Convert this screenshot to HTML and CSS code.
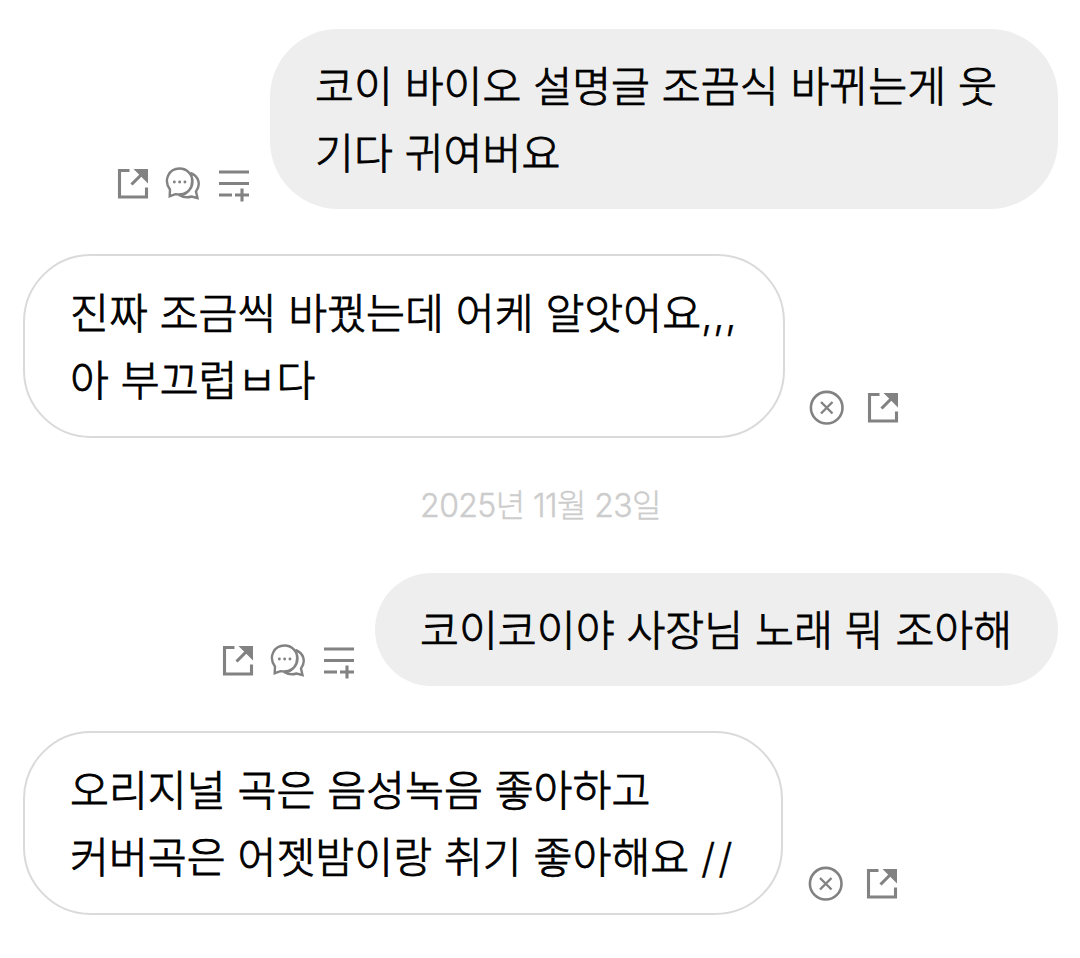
FILE: index.html
```html
<!DOCTYPE html>
<html lang="ko">
<head>
  <meta charset="UTF-8">
  <title>Chat</title>
  <link rel="stylesheet" href="styles.css">
</head>
<body>
  <svg class="defs">
    <symbol id="share" viewBox="0 0 36 36">
      <path d="M14.500 4.500H4.500V31H31.500V21.500M16.500 18.500L28 7"/>
      <path class="fill" d="M18.500 3H33V17.500Z"/>
    </symbol>
    <symbol id="chat" viewBox="0 0 36 36">
      <path class="thin" d="M4.700 30.200L5 23.500C-2 14 4 2.500 14.500 2.500C22.500 2.500 27.500 9 27.500 15.500C27.500 24.500 19 30 10.500 28.200ZM25.500 7C34 10 36 19 31 25.500L32.500 32L26.500 30.500C22 32 17 31 13 28.500C21 30 31 22 25.500 7"/>
      <path class="dots" d="M9.300 16H9.400M14.600 16H14.700M19.900 16H20"/>
    </symbol>
    <symbol id="add" viewBox="0 0 36 36">
      <path d="M3 6H33M3 17.500H33M3 29H16M26 22.500V35.500M19 29H33"/>
    </symbol>
    <symbol id="close" viewBox="0 0 36 36">
      <circle class="ring" cx="17.700" cy="17.700" r="15.800"/>
      <path class="thin" d="M12 12L23.500 23.500M23.500 12L12 23.500"/>
    </symbol>
  </svg>

  <main class="chat">
    <div class="row sent">
      <div class="actions">
        <svg><use href="#share"/></svg>
        <svg><use href="#chat"/></svg>
        <svg><use href="#add"/></svg>
      </div>
      <div class="bubble first">코이 바이오 설명글 조끔식 바뀌는게 웃<br>기다 귀여버요</div>
    </div>

    <div class="row received">
      <div class="bubble second">진짜 조금씩 바꿨는데 어케 알앗어요<span class="latin">,,,</span><br>아 부끄럽ㅂ다</div>
      <div class="actions">
        <svg><use href="#close"/></svg>
        <svg><use href="#share"/></svg>
      </div>
    </div>

    <div class="date">2025년 11월 23일</div>

    <div class="row sent">
      <div class="actions">
        <svg><use href="#share"/></svg>
        <svg><use href="#chat"/></svg>
        <svg><use href="#add"/></svg>
      </div>
      <div class="bubble third">코이코이야 사장님 노래 뭐 조아해</div>
    </div>

    <div class="row received">
      <div class="bubble fourth">오리지널 곡은 음성녹음 좋아하고<br>커버곡은 어젯밤이랑 취기 좋아해요 <span class="latin slashes">//</span></div>
      <div class="actions">
        <svg><use href="#close"/></svg>
        <svg><use href="#share"/></svg>
      </div>
    </div>
  </main>
</body>
</html>
```
FILE: styles.css
```css
* {
  box-sizing: border-box;
}

body {
  margin: 0;
  background: #fff;
  color: #000;
  font-family: "Noto Sans CJK KR", sans-serif;
}

.defs {
  display: none;
}

.chat {
  padding: 29px 22px 0 23px;
}

.row {
  display: flex;
  align-items: flex-end;
  margin-bottom: 45px;
}

.sent {
  justify-content: flex-end;
}

.bubble {
  border-radius: 68px;
  padding: 21px 45px 25px;
  font-size: 42.3px;
  font-weight: 300;
  line-height: 67px;
  white-space: nowrap;
  -webkit-text-stroke: 0.9px #000;
}

.sent .bubble {
  background: #eee;
}

.received .bubble {
  border: 2px solid #dadada;
}

.first {
  width: 788px;
}

.second {
  width: 762px;
}

.third {
  width: 683px;
}

.fourth {
  width: 760px;
}

.latin {
  font-family: Inter, sans-serif;
  line-height: 1;
  -webkit-text-stroke: 0.3px #000;
}

.slashes {
  font-size: 41px;
  letter-spacing: 3px;
}

.actions {
  display: flex;
  gap: 15px;
  margin: 0 18px 7px;
}

.sent .actions svg:first-child {
  margin-right: -1px;
}

.received .actions {
  gap: 20px;
  margin: 0 24px 12px;
}

.received .fourth + .actions {
  margin: 0 25px 13px;
}

.actions svg {
  width: 36px;
  height: 36px;
  fill: none;
  stroke: #828282;
  stroke-width: 3.1;
}

.fill {
  fill: #828282;
  stroke: none;
}

.thin {
  stroke-width: 2.4;
}

.ring {
  stroke-width: 2.6;
}

.dots {
  stroke-width: 2.8;
  stroke-linecap: round;
}

.date {
  margin-bottom: 44px;
  color: #ccc;
  font-family: Inter, "Noto Sans CJK KR", sans-serif;
  font-size: 32px;
  font-weight: 300;
  letter-spacing: -0.6px;
  line-height: 46px;
  text-align: center;
  -webkit-text-stroke: 0.4px #ccc;
}
```
